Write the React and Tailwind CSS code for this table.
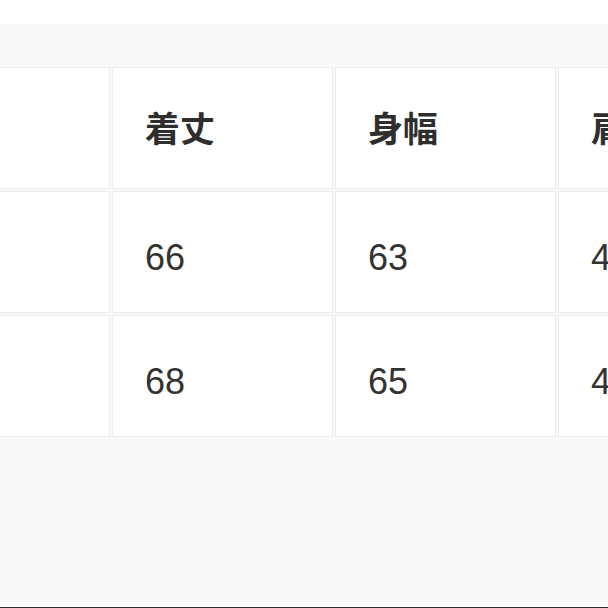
const headers = ["", "着丈", "身幅", "肩幅"];
const rows = [
  ["", "66", "63", "48"],
  ["", "68", "65", "49"],
];

export default function App() {
  return (
    <div className="w-[608px] h-[608px] overflow-hidden flex flex-col bg-white">
      <div className="h-[24px] bg-white shrink-0" />
      <div className="flex-1 bg-[#f8f8f8] pt-[43px] overflow-hidden">
        <div className="grid grid-cols-[221px_221px_221px_221px] auto-rows-[122px] gap-[2px] -ml-[111px] w-max">
          {headers.map((h, i) => (
            <div
              key={"h" + i}
              className="bg-white border border-[#ececec] flex items-center pl-[32px] pb-[4px] text-[35px] font-bold text-[#2e2e2e] leading-none"
              style={{ fontFamily: '"Noto Sans CJK JP", "Noto Sans", sans-serif' }}
            >
              {h}
            </div>
          ))}
          {rows.map((r, ri) =>
            r.map((v, ci) => (
              <div
                key={ri + "-" + ci}
                className="bg-white border border-[#ececec] flex items-center pl-[32px] pt-[11px] text-[36px] text-[#333] leading-none"
                style={{ fontFamily: '"Liberation Sans", Arial, sans-serif' }}
              >
                {v}
              </div>
            ))
          )}
        </div>
      </div>
      <div className="h-[2px] bg-white shrink-0" />
      <div className="h-[1px] bg-[#f3f3f3] shrink-0" />
      <div className="h-[2px] bg-white shrink-0" />
      <div className="h-[1px] bg-[#2a2a2a] shrink-0" />
    </div>
  );
}
